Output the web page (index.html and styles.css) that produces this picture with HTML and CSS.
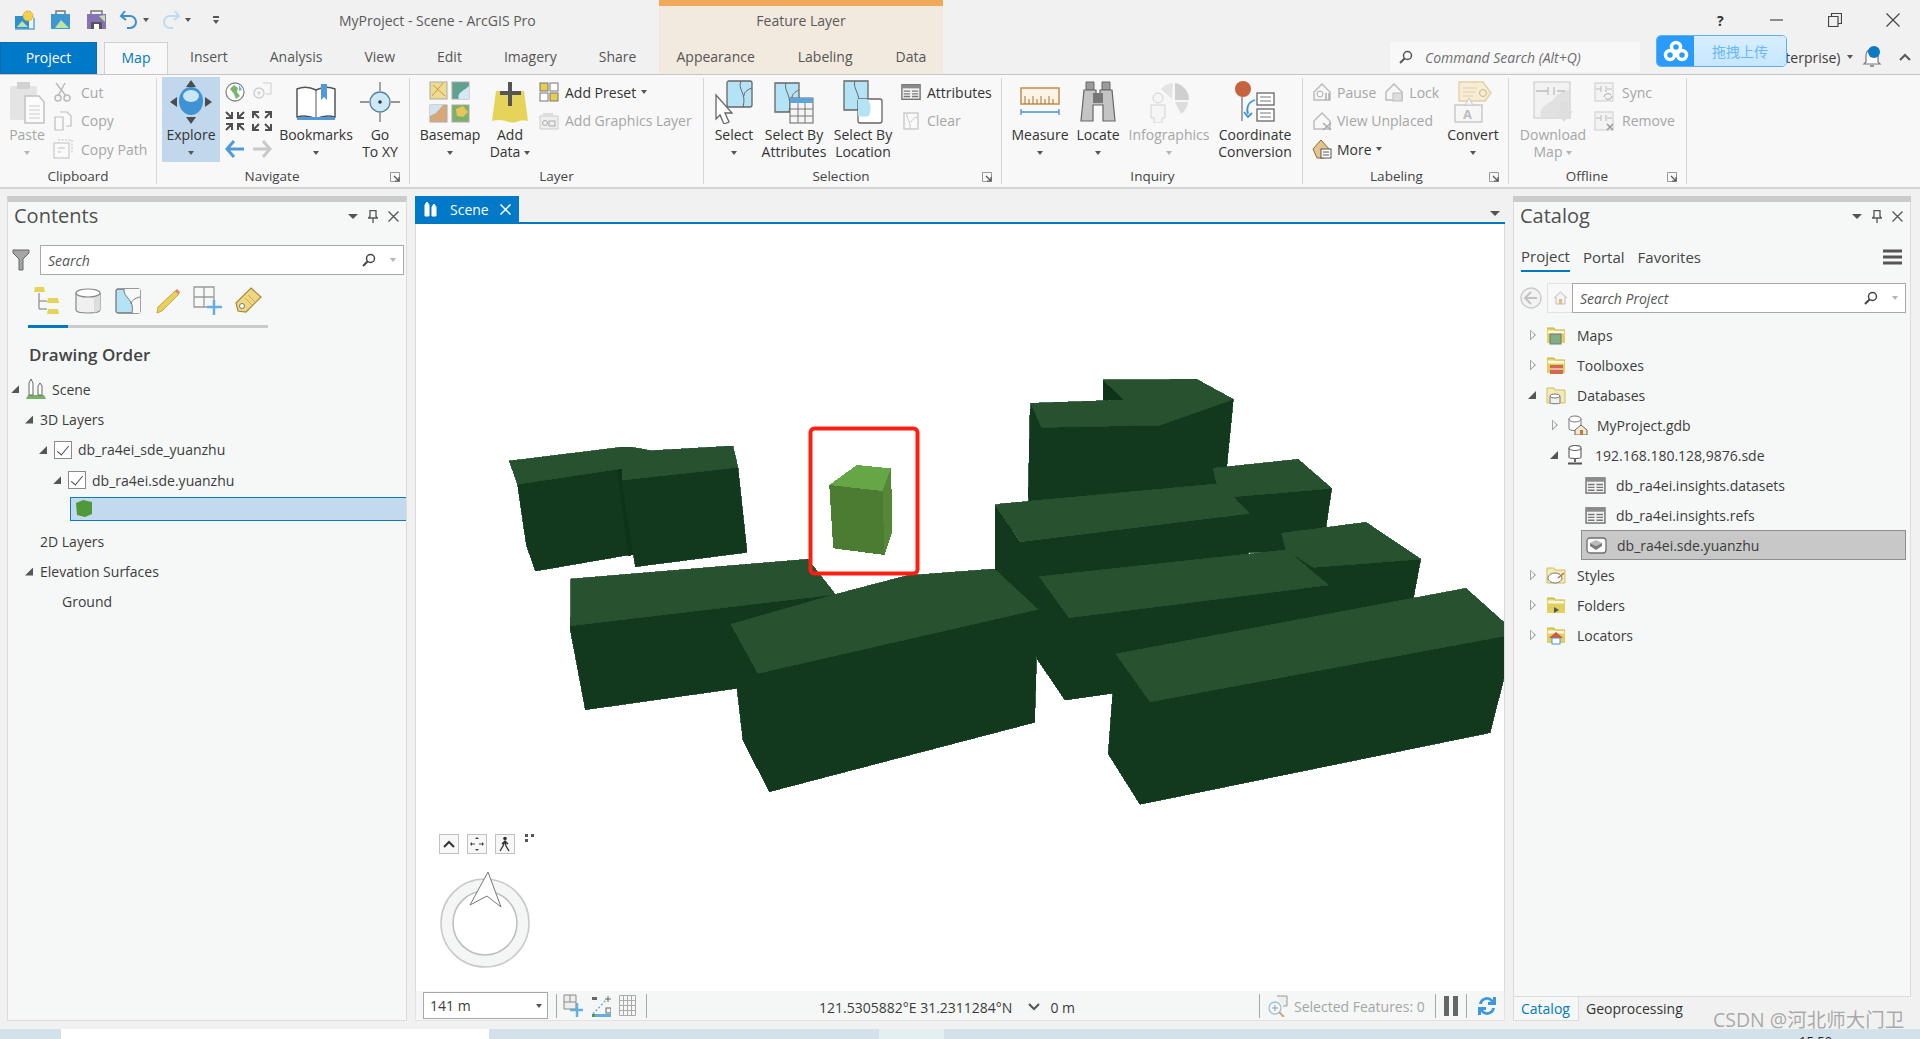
FILE: index.html
```html
<!DOCTYPE html>
<html lang="en">
<head>
<meta charset="utf-8">
<title>MyProject - Scene - ArcGIS Pro</title>
<link rel="stylesheet" href="styles.css">
</head>
<body>
<svg class="defs" width="0" height="0">
  <symbol id="folder" viewBox="0 0 20 20"><path d="M1 3h7l1 2h10v13H1z" fill="#e2cf5f"/><path d="M2 5.500h16v3H2z" fill="#fdf8dc"/><path d="M1 3h7l1 2h10" fill="none" stroke="#c9b343"/></symbol>
  <symbol id="tbl" viewBox="0 0 22 18"><rect x="1" y="1" width="20" height="16" fill="#f4f4f4" stroke="#6f6f6f" stroke-width="1.500"/><path d="M1 1h20v4H1z" fill="#8b8b8b"/><path d="M3 8h7M12 8h7M3 11h7M12 11h7M3 14h7M12 14h7" stroke="#777" stroke-width="1.500"/></symbol>
  <symbol id="launch" viewBox="0 0 10 10"><path d="M.5.500h9v9h-9z" fill="none" stroke="#999"/><path d="M4 4l5 5M9 5v4H5" fill="none" stroke="#555" stroke-width="1.200"/></symbol>
  <symbol id="tagh" viewBox="0 0 20 20"><path d="M2 10l8-8 8 8v8H2z" fill="none" stroke="#bbb" stroke-width="1.500"/><circle cx="8" cy="12" r="3" fill="none" stroke="#aaa"/><path d="M14 11v7M17 11v7" stroke="#aaa" stroke-width="1.500"/></symbol>
</svg>

<header class="top">
  <div class="top-left">
    <div class="titlebar">
      <div class="qat">
        <svg width="21" height="20" viewBox="0 0 21 20"><path d="M1 6h12l2-2v15H1z" fill="#2f8fcf"/><path d="M3 17l5-6 6 6z" fill="#bfe3a5"/><circle cx="14" cy="6" r="5" fill="#f2d24c" stroke="#c9a22e" stroke-dasharray="2 1"/><path d="M1 19h19V8" fill="none" stroke="#5aa6d8" stroke-width="1.500"/></svg>
        <svg width="21" height="20" viewBox="0 0 21 20"><path d="M6 1h9v4H6z" fill="none" stroke="#777" stroke-width="1.500"/><path d="M1 4h19v15H1z" fill="#3e97d3"/><path d="M5 18l6-8 8 8z" fill="#bfe3a5"/></svg>
        <svg width="21" height="20" viewBox="0 0 21 20"><path d="M5 1h11v4H5z" fill="none" stroke="#777" stroke-width="1.500"/><path d="M1 4h19v15H1z" fill="#8672b5"/><path d="M5 12h11v7H5z" fill="#555"/><path d="M8 14h5v5H8z" fill="#fff"/><path d="M13 6l6 6V5z" fill="#bfe3a5"/></svg>
        <span class="qat-split">
          <svg width="20" height="22" viewBox="0 0 20 22"><path d="M6 2L2 7l5 4" fill="none" stroke="#3b8fd0" stroke-width="2"/><path d="M3 7h8a6 6 0 0 1 0 12H8" fill="none" stroke="#3b8fd0" stroke-width="2"/></svg><i class="caret dark"></i>
        </span>
        <span class="qat-split">
          <svg width="20" height="22" viewBox="0 0 20 22"><path d="M14 2l4 5-5 4" fill="none" stroke="#bcdcf1" stroke-width="2"/><path d="M17 7H9a6 6 0 0 0 0 12h3" fill="none" stroke="#bcdcf1" stroke-width="2"/></svg><i class="caret dark"></i>
        </span>
        <span class="qat-more"><i class="bar"></i><i class="caret dark"></i></span>
      </div>
      <span class="title">MyProject - Scene - ArcGIS Pro</span>
    </div>
    <nav class="tabs">
      <span class="tab project">Project</span>
      <span class="tab active">Map</span>
      <span class="tab">Insert</span>
      <span class="tab">Analysis</span>
      <span class="tab">View</span>
      <span class="tab">Edit</span>
      <span class="tab">Imagery</span>
      <span class="tab">Share</span>
    </nav>
  </div>
  <div class="top-band">
    <div class="band-title">Feature Layer</div>
    <nav class="tabs band-tabs">
      <span class="tab">Appearance</span>
      <span class="tab">Labeling</span>
      <span class="tab">Data</span>
    </nav>
  </div>
  <div class="top-right">
    <div class="winctl">
      <span class="help">?</span>
      <svg width="14" height="14" viewBox="0 0 14 14"><path d="M0 7h13" stroke="#555" stroke-width="1.300"/></svg>
      <svg width="14" height="14" viewBox="0 0 14 14"><path d="M.5 3.500h9.500v10H.5zM3.500 3.500V.5h10v10H10" fill="none" stroke="#444" stroke-width="1.200"/></svg>
      <svg width="14" height="14" viewBox="0 0 14 14"><path d="M.5.5l13 13M13.500.5l-13 13" stroke="#444" stroke-width="1.200"/></svg>
    </div>
    <div class="searchrow">
      <div class="cmd">
        <svg width="14" height="14" viewBox="0 0 14 14"><circle cx="8.500" cy="5.500" r="4" fill="none" stroke="#555" stroke-width="1.500"/><path d="M5.500 8.500L1 13" stroke="#555" stroke-width="2"/></svg>
        <span>Command Search (Alt+Q)</span>
      </div>
      <div class="user">
        <span class="lic">Enterprise)</span><i class="caret dark"></i>
        <span class="bell">
          <svg width="20" height="22" viewBox="0 0 20 22"><path d="M4 16V9a6 6 0 0 1 12 0v7l2 2H2z" fill="#fff" stroke="#777" stroke-width="1.200"/><path d="M8 20h4" stroke="#777" stroke-width="1.500"/><circle cx="12" cy="6" r="6" fill="#0a7ac4"/></svg>
        </span>
        <svg class="collapse" width="12" height="8" viewBox="0 0 12 8"><path d="M1 7l5-5 5 5" fill="none" stroke="#555" stroke-width="2"/></svg>
      </div>
    </div>
    <div class="upload">
      <span class="upload-logo"><svg width="26" height="22" viewBox="0 0 26 22"><g fill="none" stroke="#fff" stroke-width="3.500"><circle cx="13" cy="7" r="4.500"/><circle cx="7" cy="15" r="4.500"/><circle cx="19" cy="15" r="4.500"/></g></svg></span>
      <span class="upload-text">拖拽上传</span>
    </div>
  </div>
</header>

<section class="ribbon">
  <div class="grp g-clip">
    <div class="body">
      <div class="lg w46 off">
        <div class="ico"><svg width="36" height="44" viewBox="0 0 36 44"><rect x="1" y="6" width="27" height="34" rx="2" fill="#e4e4e4"/><rect x="8" y="2" width="13" height="7" fill="#d2d2d2"/><path d="M16 16h14l5 6v21H16z" fill="#fbfbfb" stroke="#c2c2c2" stroke-width="1.500"/><path d="M20 26h11M20 30h11M20 34h11M20 38h11" stroke="#ccc"/></svg></div>
        <span class="lbl">Paste</span><span class="lbl"><i class="caret"></i></span>
      </div>
      <div class="col">
        <div class="sm off"><svg width="20" height="20" viewBox="0 0 20 20"><path d="M3 1l10 13M12 1L5 14" stroke="#bbb" stroke-width="1.500"/><circle cx="5" cy="16" r="3" fill="none" stroke="#bbb" stroke-width="1.500"/><circle cx="14" cy="16" r="3" fill="none" stroke="#bbb" stroke-width="1.500"/></svg><span>Cut</span></div>
        <div class="sm off"><svg width="20" height="20" viewBox="0 0 20 20"><path d="M2 6h8v13H2zM7 1h7l4 4v10h-5" fill="#fafafa" stroke="#bfbfbf" stroke-width="1.200"/></svg><span>Copy</span></div>
        <div class="sm off"><svg width="20" height="20" viewBox="0 0 20 20"><path d="M5 1h14v14" fill="none" stroke="#bfbfbf" stroke-dasharray="2 1.500"/><rect x="1" y="4" width="15" height="15" fill="#fafafa" stroke="#bfbfbf"/><path d="M5 9h7M5 13h3" stroke="#bfbfbf"/></svg><span>Copy Path</span></div>
      </div>
    </div>
    <div class="cap"><span>Clipboard</span></div>
  </div>

  <div class="grp g-nav">
    <div class="body">
      <div class="lg w58 hl">
        <div class="ico"><svg width="44" height="46" viewBox="0 0 44 46"><path d="M22 1l5 7H17zM22 45l5-7H17zM1 23l7-5v10zM43 23l-7-5v10z" fill="#4d4d4d"/><ellipse cx="22" cy="22" rx="12" ry="14" fill="#3f93d4"/><ellipse cx="22" cy="17" rx="8" ry="6" fill="#c9e6f7"/></svg></div>
        <span class="lbl">Explore</span><span class="lbl"><i class="caret dark"></i></span>
      </div>
      <div class="navgrid">
        <svg width="20" height="22" viewBox="0 0 20 22"><circle cx="10" cy="11" r="9" fill="#fff" stroke="#888" stroke-width="1.300"/><path d="M5 8l4-4 4 3-1 4 3 4-4 3-2-5z" fill="#79b56a"/><path d="M14 4l3 5-3 1z" fill="#67b2de"/></svg>
        <svg width="20" height="20" viewBox="0 0 20 20"><circle cx="7" cy="11" r="5" fill="none" stroke="#ccc" stroke-width="1.300"/><path d="M11 1h8v11h-5" fill="none" stroke="#ccc"/><path d="M5 11h4M7 9v4" stroke="#ccc"/></svg>
        <svg width="20" height="20" viewBox="0 0 20 20"><path d="M1 1l6 6M7 1v6H1M19 1l-6 6M13 1v6h6M1 19l6-6M7 19v-6H1M19 19l-6-6M13 19v-6h6" fill="none" stroke="#4f4f4f" stroke-width="2"/></svg>
        <svg width="20" height="20" viewBox="0 0 20 20"><path d="M7 7L1 1M1 7V1h6M13 7l6-6M19 7V1h-6M7 13l-6 6M1 13v6h6M13 13l6 6M19 13v6h-6" fill="none" stroke="#4f4f4f" stroke-width="2"/></svg>
        <svg width="20" height="20" viewBox="0 0 20 20"><path d="M9 2L2 10l7 8M2 10h17" fill="none" stroke="#4f9bd9" stroke-width="3"/></svg>
        <svg width="20" height="20" viewBox="0 0 20 20"><path d="M11 2l7 8-7 8M18 10H1" fill="none" stroke="#c9c9c9" stroke-width="3"/></svg>
      </div>
      <div class="lg w84">
        <div class="ico"><svg width="42" height="38" viewBox="0 0 42 38"><path d="M2 6c7-3 13-2 19 1 6-3 12-4 19-1v28c-7-2-13-1-19 2-6-3-12-4-19-2z" fill="#fff" stroke="#555" stroke-width="1.500"/><path d="M21 7v29" stroke="#555"/><path d="M26 1h6v16l-3-3-3 3z" fill="#4f9bd9"/><path d="M2 34h38v3H2z" fill="#4f9bd9"/></svg></div>
        <span class="lbl">Bookmarks</span><span class="lbl"><i class="caret dark"></i></span>
      </div>
      <div class="lg w44">
        <div class="ico"><svg width="40" height="42" viewBox="0 0 40 42"><circle cx="20" cy="21" r="10" fill="#cde9f8" stroke="#5a7f98" stroke-width="1.300"/><circle cx="20" cy="21" r="1.800" fill="#333"/><path d="M20 1v9M20 32v9M0 21h9M31 21h9" stroke="#777" stroke-width="1.300"/></svg></div>
        <span class="lbl">Go</span><span class="lbl">To XY</span>
      </div>
    </div>
    <div class="cap launchable"><span>Navigate</span><svg width="10" height="10"><use href="#launch"/></svg></div>
  </div>

  <div class="grp g-layer">
    <div class="body">
      <div class="lg w68">
        <div class="ico"><svg width="42" height="42" viewBox="0 0 42 42"><rect x="1" y="1" width="17" height="17" fill="#ecdc8d" stroke="#aaa"/><path d="M3 15L14 2M4 4l12 11" stroke="#cf8f5a"/><rect x="23" y="1" width="17" height="17" fill="#5fa08f" stroke="#aaa"/><path d="M30 18c-3-6 6-9 10-13v13z" fill="#d2e8f4"/><rect x="1" y="24" width="17" height="17" fill="#d6a777" stroke="#aaa"/><path d="M1 24h13l-7 8-6 3z" fill="#cfe4ef"/><rect x="23" y="24" width="17" height="17" fill="#7fb069" stroke="#aaa"/><path d="M27 28l7-3 5 6-5 5-6-1z" fill="#e8c45c"/></svg></div>
        <span class="lbl">Basemap</span><span class="lbl"><i class="caret dark"></i></span>
      </div>
      <div class="lg w52">
        <div class="ico"><svg width="38" height="44" viewBox="0 0 38 44"><path d="M5 11h28l4 30c-8-3-11 3-19 1-6-2-11-3-17-1z" fill="#e6d35a"/><path d="M19 2v24M9 13h21" stroke="#555" stroke-width="4"/></svg></div>
        <span class="lbl">Add</span><span class="lbl">Data<i class="caret dark mini"></i></span>
      </div>
      <div class="col">
        <div class="sm gap4"><svg width="20" height="20" viewBox="0 0 20 20"><rect x="1" y="1" width="8" height="8" fill="#e6cf4f" stroke="#777"/><rect x="11" y="1" width="8" height="8" fill="#fff" stroke="#777"/><rect x="1" y="11" width="8" height="8" fill="#fff" stroke="#777"/><rect x="11" y="11" width="8" height="8" fill="#e6cf4f" stroke="#777"/></svg><span>Add Preset</span><i class="caret dark tight"></i></div>
        <div class="sm gap4 off"><svg width="20" height="20" viewBox="0 0 20 20"><path d="M1 5h18v13H1z" fill="#eee" stroke="#ccc"/><rect x="4" y="2" width="10" height="3" fill="#ddd"/><circle cx="6" cy="12" r="2.500" fill="none" stroke="#aaa"/><rect x="10" y="10" width="6" height="5" fill="none" stroke="#aaa"/></svg><span>Add Graphics Layer</span></div>
      </div>
    </div>
    <div class="cap"><span>Layer</span></div>
  </div>

  <div class="grp g-sel">
    <div class="body">
      <div class="lg w52">
        <div class="ico"><svg width="40" height="44" viewBox="0 0 40 44"><rect x="13" y="1" width="25" height="26" rx="2" fill="#b5e3f6" stroke="#666" stroke-width="1.300"/><path d="M27 1c-4 8 6 12 2 26M38 8C32 10 30 13 30 16" fill="none" stroke="#666"/><path d="M2 15l16 18-7 0 4 9-5 2-4-9-4 4z" fill="#fff" stroke="#666" stroke-width="1.300"/></svg></div>
        <span class="lbl">Select</span><span class="lbl"><i class="caret dark"></i></span>
      </div>
      <div class="lg w68">
        <div class="ico"><svg width="40" height="44" viewBox="0 0 40 44"><path d="M1 3h24v29H1z" fill="#b5e3f6" stroke="#666" stroke-width="1.300"/><path d="M12 3c-3 8 7 12 3 29M25 10c-5 2-7 5-7 8" fill="none" stroke="#666"/><rect x="16" y="18" width="23" height="25" fill="#f5f5f5" stroke="#666"/><path d="M16 18h23v5H16z" fill="#5ca5dc"/><path d="M16 29h23M16 36h23M24 23v20M31 23v20" stroke="#777"/></svg></div>
        <span class="lbl">Select By</span><span class="lbl">Attributes</span>
      </div>
      <div class="lg w70">
        <div class="ico"><svg width="40" height="44" viewBox="0 0 40 44"><path d="M1 1h24v29H1z" fill="#b5e3f6" stroke="#666" stroke-width="1.300"/><path d="M12 1c-3 8 7 12 3 29" fill="none" stroke="#666"/><rect x="15" y="19" width="24" height="24" rx="2" fill="#fff" stroke="#666" stroke-width="1.300"/><path d="M15 19h9c6 6 3 14 2 17-3 1-7 1-11 0z" fill="#b5e3f6"/></svg></div>
        <span class="lbl">Select By</span><span class="lbl">Location</span>
      </div>
      <div class="col">
        <div class="sm gap4"><svg width="20" height="18"><use href="#tbl"/></svg><span>Attributes</span></div>
        <div class="sm gap4 off"><svg width="20" height="20" viewBox="0 0 20 20"><rect x="3" y="2" width="14" height="16" fill="#fafafa" stroke="#c5c5c5" stroke-width="1.300"/><path d="M6 3c-1 5 4 6 3 15M16 6c-3 1-5 3-6 5" fill="none" stroke="#c5c5c5"/></svg><span>Clear</span></div>
      </div>
    </div>
    <div class="cap launchable"><span>Selection</span><svg width="10" height="10"><use href="#launch"/></svg></div>
  </div>

  <div class="grp g-inq">
    <div class="body">
      <div class="lg w62">
        <div class="ico"><svg width="40" height="30" viewBox="0 0 40 30"><rect x="1" y="1" width="38" height="16" fill="#fdf4e6" stroke="#c58b4a" stroke-width="1.500"/><path d="M5 17v-8M9 17v-5M13 17v-8M17 17v-5M21 17v-8M25 17v-5M29 17v-8M33 17v-5" stroke="#a9713a"/><path d="M1 25h38M1 22v6M39 22v6" stroke="#3f93d4" stroke-width="1.300"/></svg></div>
        <span class="lbl">Measure</span><span class="lbl"><i class="caret dark"></i></span>
      </div>
      <div class="lg w54">
        <div class="ico"><svg width="36" height="42" viewBox="0 0 36 42"><path d="M6 1h8v8H6zM22 1h8v8h-8z" fill="#9c9c9c" stroke="#666"/><path d="M4 9h12v8h4V9h12l3 31H23V24h-10v16H1z" fill="#c4c4c4" stroke="#666" stroke-width="1.200"/><path d="M13 12h10v10H13z" fill="#777"/></svg></div>
        <span class="lbl">Locate</span><span class="lbl"><i class="caret dark"></i></span>
      </div>
      <div class="lg w88 off">
        <div class="ico"><svg width="42" height="42" viewBox="0 0 42 42"><path d="M24 18L25 2a17 17 0 0 0-12 6z" fill="#e4e4e4"/><path d="M27 2a17 17 0 0 1 14 17H27z" fill="#cfcfcf"/><path d="M27 21h13a17 17 0 0 1-7 12z" fill="#dcdcdc"/><circle cx="10" cy="17" r="5" fill="#f5f5f5" stroke="#d3d3d3"/><path d="M3 24h14v13h-3v5H6v-5H3z" fill="#f5f5f5" stroke="#d3d3d3"/></svg></div>
        <span class="lbl">Infographics</span><span class="lbl"><i class="caret"></i></span>
      </div>
      <div class="lg w84">
        <div class="ico"><svg width="40" height="44" viewBox="0 0 40 44"><circle cx="8" cy="9" r="8" fill="#c5633f"/><path d="M7 17v24" stroke="#888" stroke-width="1.500"/><rect x="22" y="13" width="17" height="12" fill="#fff" stroke="#666" stroke-width="1.300"/><path d="M25 17h11M25 21h11" stroke="#777"/><rect x="22" y="29" width="17" height="12" fill="#fff" stroke="#666" stroke-width="1.300"/><path d="M25 33h11M25 37h11" stroke="#777"/><path d="M20 20c-7 2-9 8-7 14M9 32l4 5 4-4" fill="none" stroke="#3f93d4" stroke-width="1.800"/></svg></div>
        <span class="lbl">Coordinate</span><span class="lbl">Conversion</span>
      </div>
    </div>
    <div class="cap"><span>Inquiry</span></div>
  </div>

  <div class="grp g-lab">
    <div class="body">
      <div class="col w140">
        <div class="sm gap3 off"><svg width="20" height="20"><use href="#tagh"/></svg><span>Pause</span><svg class="lock" width="20" height="20" viewBox="0 0 20 20"><path d="M2 10l8-8 8 8v8H2z" fill="none" stroke="#bbb" stroke-width="1.500"/><rect x="9" y="11" width="9" height="8" fill="#ddd" stroke="#bbb"/></svg><span>Lock</span></div>
        <div class="sm gap3 off"><svg width="20" height="20" viewBox="0 0 20 20"><path d="M2 10l8-8 8 8v8H2z" fill="none" stroke="#bbb" stroke-width="1.500"/><path d="M11 12l8 7M19 12l-8 7" stroke="#aaa" stroke-width="1.500"/></svg><span>View Unplaced</span></div>
        <div class="sm gap3"><svg width="20" height="20" viewBox="0 0 20 20"><path d="M1 10l8-9 8 9-5 9H5z" fill="#e3c58d" stroke="#8a6b34"/><rect x="9" y="10" width="10" height="9" fill="#fff" stroke="#555"/><path d="M11 13h6M11 16h6" stroke="#555"/></svg><span>More</span><i class="caret dark tight"></i></div>
      </div>
      <div class="lg w60">
        <div class="ico"><svg width="38" height="42" viewBox="0 0 38 42"><path d="M5 1h24l8 11-6 8H5z" fill="#f7ecd6" stroke="#e3cfa6" stroke-width="1.300"/><path d="M9 7h14M9 11h12M9 15h10" stroke="#e3cfa6"/><circle cx="29" cy="12" r="3.500" fill="none" stroke="#cdb587"/><path d="M1 24h27v17H1z" fill="#f6f6f6" stroke="#c9c9c9" stroke-width="1.500"/><path d="M15 17l-4 7h8z" fill="#f6f6f6" stroke="#c9c9c9"/><text x="9" y="38" class="icon-a">A</text></svg></div>
        <span class="lbl">Convert</span><span class="lbl"><i class="caret dark"></i></span>
      </div>
    </div>
    <div class="cap launchable"><span>Labeling</span><svg width="10" height="10"><use href="#launch"/></svg></div>
  </div>

  <div class="grp g-off">
    <div class="body">
      <div class="lg w76 off">
        <div class="ico"><svg width="40" height="42" viewBox="0 0 40 42"><rect x="1" y="1" width="36" height="36" fill="#f2f2f2" stroke="#d6d6d6" stroke-width="1.500"/><path d="M8 36c-2-8 3-10 7-14 8-3 6-10 21-13v27z" fill="#e1e1e1"/><path d="M3 10h12M24 10h8M15 6v8M21 6v8" stroke="#bdbdbd" stroke-width="1.300"/><path d="M27 20h8v10h5L31 41 22 30h5z" fill="#dedede"/></svg></div>
        <span class="lbl">Download</span><span class="lbl">Map<i class="caret mini"></i></span>
      </div>
      <div class="col">
        <div class="sm off"><svg width="20" height="20" viewBox="0 0 20 20"><rect x="1" y="1" width="18" height="18" fill="#f3f3f3" stroke="#ccc"/><path d="M2 7h5M13 7h5M7 4v6M12 4v6" stroke="#bbb"/><path d="M10 15a4 4 0 0 1 7-2M18 14a4 4 0 0 1-7 2" fill="none" stroke="#aaa"/></svg><span>Sync</span></div>
        <div class="sm off"><svg width="20" height="20" viewBox="0 0 20 20"><rect x="1" y="1" width="18" height="18" fill="#f3f3f3" stroke="#ccc"/><path d="M2 7h5M13 7h5M7 4v6M12 4v6" stroke="#bbb"/><path d="M13 13l6 6M19 13l-6 6" stroke="#999" stroke-width="1.500"/></svg><span>Remove</span></div>
      </div>
    </div>
    <div class="cap launchable"><span>Offline</span><svg width="10" height="10"><use href="#launch"/></svg></div>
  </div>
</section>

<main class="work">
  <aside class="panel contents">
    <div class="phead"><span class="ptitle">Contents</span>
      <span class="pctl"><i class="caret dark big"></i>
        <svg width="10" height="13" viewBox="0 0 10 13"><path d="M2 .5h6v6l1.500 1.500h-9L2 6.500zM5 8v5" fill="none" stroke="#555" stroke-width="1.300"/></svg>
        <svg width="11" height="11" viewBox="0 0 11 11"><path d="M.5.5l10 10M10.500.5l-10 10" stroke="#555" stroke-width="1.300"/></svg>
      </span>
    </div>
    <div class="searchline">
      <svg class="filter" width="18" height="22" viewBox="0 0 18 22"><path d="M1 1h16v3l-6 6v11H7V10L1 4z" fill="#a5a5a5" stroke="#666"/></svg>
      <div class="sbox"><span>Search</span>
        <svg width="14" height="14" viewBox="0 0 14 14"><circle cx="8.500" cy="5.500" r="4" fill="none" stroke="#444" stroke-width="1.500"/><path d="M5.500 8.500L1 13" stroke="#444" stroke-width="2"/></svg><i class="caret"></i>
      </div>
    </div>
    <div class="viewtabs">
      <span><svg width="28" height="28" viewBox="0 0 28 28"><path d="M1 0h9l1 5H0zM14 11h10l1 5H13zM14 22h10l1 5H13z" fill="#e6d35a"/><path d="M5 6v16h8M5 14h8" fill="none" stroke="#777"/></svg></span>
      <span><svg width="26" height="26" viewBox="0 0 26 26"><path d="M1 5v17c0 4 24 4 24 0V5" fill="#f0f0f0" stroke="#888" stroke-width="1.200"/><path d="M19 8v17l6-3V5z" fill="#ddd"/><ellipse cx="13" cy="5" rx="12" ry="4" fill="#fff" stroke="#888" stroke-width="1.200"/></svg></span>
      <span><svg width="26" height="26" viewBox="0 0 26 26"><rect x="1" y="1" width="24" height="24" rx="2" fill="#b5e3f6" stroke="#777" stroke-width="1.300"/><path d="M9 1c-1 9 11 10 8 24h8V1z" fill="#f8f8f8"/><path d="M9 1c-1 9 11 10 8 24M25 9c-5 1-9 4-9 7" fill="none" stroke="#777"/></svg></span>
      <span><svg width="26" height="26" viewBox="0 0 26 26"><path d="M3 19L20 3l4 3L7 23l-5 2z" fill="#e9cf5e" stroke="#b59b33" stroke-width=".8"/><path d="M20 3l2-2 3 3-1 2z" fill="#d98672"/></svg></span>
      <span><svg width="30" height="30" viewBox="0 0 30 30"><path d="M1 1h20v20H1zM11 1v20M1 11h20" fill="none" stroke="#999" stroke-width="1.300"/><path d="M21 14v15M14 21h15" stroke="#65aee0" stroke-width="2.500"/></svg></span>
      <span><svg width="28" height="28" viewBox="0 0 28 28"><path d="M17 1l10 9-15 15-8-1-2-8z" fill="#edd782" stroke="#a98a3c" stroke-width="1.200"/><circle cx="8" cy="19" r="2.500" fill="#fff" stroke="#777"/><path d="M11 11l7 7M14 8l7 7" stroke="#c9ae55"/></svg></span>
    </div>
    <div class="vt-rule"><i></i></div>
    <h2 class="order">Drawing Order</h2>
    <ul class="tree">
      <li class="l0"><i class="tri open"></i><svg width="20" height="22" viewBox="0 0 20 22"><path d="M0 21l2-4h16l2 4z" fill="#78b06a"/><path d="M3 17V5l2-4 2 4v12zM12 17V8l2-3 2 3v9z" fill="#fff" stroke="#666"/></svg><span>Scene</span></li>
      <li class="l1"><i class="tri open"></i><span>3D Layers</span></li>
      <li class="l2"><i class="tri open"></i><i class="chk"></i><span>db_ra4ei_sde_yuanzhu</span></li>
      <li class="l3"><i class="tri open"></i><i class="chk"></i><span>db_ra4ei.sde.yuanzhu</span></li>
      <li class="l4"><div class="selbar"><svg width="18" height="19" viewBox="0 0 18 19"><path d="M1 4l7-3 9 2v12l-7 3-8-2z" fill="#4e9a3a"/></svg></div></li>
      <li class="l1 noicon"><span>2D Layers</span></li>
      <li class="l1"><i class="tri open"></i><span>Elevation Surfaces</span></li>
      <li class="l5"><span>Ground</span></li>
    </ul>
  </aside>

  <section class="view">
    <div class="viewtab-strip">
      <div class="scenetab">
        <svg width="16" height="16" viewBox="0 0 16 16"><path d="M2 15V4l2-3 2 3v11zM9 15V6l2-3 2 3v9z" fill="#fff" stroke="#fff"/></svg>
        <span>Scene</span>
        <svg width="11" height="11" viewBox="0 0 11 11"><path d="M.5.5l10 10M10.500.5l-10 10" stroke="#fff" stroke-width="1.500"/></svg>
      </div>
      <i class="caret dark big strip-menu"></i>
    </div>
    <div class="scene">
      <svg class="buildings" viewBox="415 224 1090 767" width="1090" height="767">
        <g class="side"><polygon points="517.500,484 622,468 628,555 535.400,571 526.400,545"/></g>
        <g class="top"><polygon points="509.300,461 621,447.300 631.800,447.300 622,468.300 517.500,484"/></g>
        <g class="seam"><polygon points="617,470 624,468 634,555 628,556"/></g>
        <g class="side"><polygon points="622,480 737.900,467.300 747,552.300 635.400,566.700 633.600,555"/></g>
        <g class="top"><polygon points="622,480 737.900,467.300 732.900,446 651.400,450.700 631.800,447.300 622,468.300"/></g>

        <g class="side"><polygon points="1041.700,427.300 1160,425 1233.300,399.300 1226.700,466.700 1217,490 1030,510 1028.300,496.700 1030,415 1031,403.300"/></g>
        <g class="seam"><polygon points="1103.300,380 1124,400 1103.300,400.700"/></g>
        <g class="top"><polygon points="1031,403.300 1124,400 1103.300,380 1196.700,379.300 1233.300,399.300 1160,425 1041.700,427.300"/></g>
        <g class="side"><polygon points="1233.300,496.700 1331.700,488.300 1326,526.700 1286,552 1248.300,552"/></g>
        <g class="top"><polygon points="1213.300,468.300 1298.300,459.300 1331.700,488.300 1233.300,496.700 1216.700,483.300"/></g>

        <g class="side"><polygon points="995,505 1020,542 1249,513 1248,555 1040,590 1040,660 995,600"/></g>
        <g class="top"><polygon points="995,505 1000,504 1216.700,484 1233.300,496.700 1249.300,513.300 1020.700,541.700"/></g>

        <g class="side"><polygon points="1286,550 1313.300,567.300 1420.700,559 1413.300,598.300 1328.300,620 1300,600"/></g>
        <g class="top"><polygon points="1281.700,533.300 1366,522.300 1420.700,559 1313.300,567.300 1286,550"/></g>

        <g class="side"><polygon points="1069,617.700 1328.300,585 1328.300,615 1125,660 1125,691.500 1065,700 1037.300,659.300 1039.300,576.700"/></g>
        <g class="top"><polygon points="1039.300,576.700 1286.700,550 1328.300,585 1069,617.700"/></g>

        <g class="side"><polygon points="570.400,625.700 835.400,594.300 900,600 737,688.300 585.400,709.700 570.400,630"/></g>
        <g class="top"><polygon points="571,579 807.900,559.300 835.400,594.300 570.400,625.700"/></g>

        <g class="side"><polygon points="757.900,673.300 1037.900,609.300 1034.600,722.300 769.300,791.700 743,740 737,688 731,624.300"/></g>
        <g class="top"><polygon points="731,624.300 837,594 906.800,575.700 994.300,569 1037.900,609.300 757.900,673.300"/></g>

        <g class="side"><polygon points="1150,701.700 1504,636 1503.500,680 1490,732.700 1140,804.300 1108.300,754 1113,690 1116,654"/></g>
        <g class="top"><polygon points="1116,654 1466,588.300 1504,622.300 1504,636 1150,701.700"/></g>

        <polygon class="cube-top" points="829.300,485 856.800,465 890.700,468.300 882.500,491"/>
        <polygon class="cube-front" points="829.300,485 882.500,491 884.600,555 833.200,548.300"/>
        <polygon class="cube-right" points="882.500,491 890.700,468.300 892,501.700 892,532.700 884.600,555"/>
        <rect class="redbox" x="810.500" y="428.500" width="107" height="145" rx="4"/>
      </svg>
      <div class="navbtns">
        <span class="nbtn"><svg width="12" height="8" viewBox="0 0 12 8"><path d="M1 7l5-5 5 5" fill="none" stroke="#333" stroke-width="2"/></svg></span>
        <span class="nbtn"><svg width="16" height="16" viewBox="0 0 16 16"><path d="M8 1l2 2H6zM8 15l2-2H6zM1 8l2-2v4zM15 8l-2-2v4z" fill="#444"/><path d="M3 8h3M10 8h3" stroke="#444"/></svg></span>
        <span class="nbtn"><svg width="14" height="16" viewBox="0 0 14 16"><circle cx="7" cy="2.500" r="1.800" fill="#333"/><path d="M7 5L5 10l-3 5M7 5l1 5 3 5M4 8l3-3 3 3" fill="none" stroke="#333" stroke-width="1.300"/></svg></span>
        <span class="grip"><i></i><i></i><i></i></span>
      </div>
      <svg class="compass" width="96" height="100" viewBox="0 0 96 100"><circle cx="45" cy="54" r="44" fill="#f4f6f5" stroke="#c9c9c9" stroke-width="1.500"/><circle cx="45" cy="54" r="32" fill="#fff" stroke="#bdbdbd" stroke-width="1.500"/><path d="M48 3L30 36l17-9 14 11z" fill="#fff" stroke="#777"/></svg>
    </div>
    <footer class="status">
      <div class="scale"><span>141 m</span><i class="caret dark"></i></div>
      <i class="vsep"></i>
      <svg class="st-first" width="20" height="26" viewBox="0 0 20 26"><path d="M1 2h12v14H1zM1 9h12M7 2v7" fill="#eee" stroke="#888"/><path d="M14 10v14M7 17h13" stroke="#65aee0" stroke-width="2.500"/></svg>
      <svg width="20" height="24" viewBox="0 0 20 24"><path d="M1 20h20v3H1z" fill="#65aee0"/><path d="M2 20L16 5" stroke="#65aee0" stroke-dasharray="2 2" stroke-width="1.500"/><rect x="1" y="3" width="5" height="3" fill="#666"/><rect x="15" y="14" width="5" height="5" fill="none" stroke="#666"/><path d="M14 5h6M17 2v6" stroke="#666"/><rect x="1" y="20" width="3" height="3" fill="#5a9a3c"/></svg>
      <svg width="17" height="21" viewBox="0 0 17 21"><path d="M.5.500h16v20H.5zM.5 5.500h16M.5 10.500h16M.5 15.500h16M4.500.5v20M8.500.5v20M12.500.5v20" fill="none" stroke="#aaa"/></svg>
      <i class="vsep st-after"></i>
      <span class="coords">121.5305882°E 31.2311284°N</span>
      <svg class="chev" width="12" height="8" viewBox="0 0 12 8"><path d="M1 1l5 5 5-5" fill="none" stroke="#555" stroke-width="2"/></svg>
      <span class="elev">0 m</span>
      <i class="vsep right"></i>
      <svg width="20" height="22" viewBox="0 0 20 22"><circle cx="7" cy="13" r="6" fill="#f4f7f9" stroke="#9cc2dc" stroke-width="1.300"/><path d="M11 17l5 5" stroke="#c9a67d" stroke-width="2"/><path d="M9 1h10v10h-4" fill="#eee" stroke="#999"/><path d="M4 13h6M7 10v6" stroke="#999"/></svg>
      <span class="selcount">Selected Features: 0</span>
      <i class="vsep st-p"></i>
      <span class="pause"><i></i><i></i></span>
      <i class="vsep"></i>
      <svg class="st-refresh" width="20" height="20" viewBox="0 0 20 20"><path d="M2 8a8 8 0 0 1 14-4V1h3v8h-8V6h3a5 5 0 0 0-9 2zM18 12a8 8 0 0 1-14 4v3H1v-8h8v3H6a5 5 0 0 0 9-2z" fill="#3f97dc"/></svg>
    </footer>
  </section>

  <aside class="panel catalog">
    <div class="catalog-body">
      <div class="phead"><span class="ptitle">Catalog</span>
        <span class="pctl"><i class="caret dark big"></i>
          <svg width="10" height="13" viewBox="0 0 10 13"><path d="M2 .5h6v6l1.500 1.500h-9L2 6.500zM5 8v5" fill="none" stroke="#555" stroke-width="1.300"/></svg>
          <svg width="11" height="11" viewBox="0 0 11 11"><path d="M.5.5l10 10M10.500.5l-10 10" stroke="#555" stroke-width="1.300"/></svg>
        </span>
      </div>
      <div class="cattabs">
        <span class="on">Project</span><span>Portal</span><span>Favorites</span>
        <svg width="19" height="16" viewBox="0 0 19 16"><path d="M0 2h19M0 8h19M0 14h19" stroke="#555" stroke-width="3.200"/></svg>
      </div>
      <div class="catsearch">
        <svg width="22" height="22" viewBox="0 0 22 22"><circle cx="11" cy="11" r="10" fill="#f3f3f3" stroke="#c9c9c9" stroke-width="1.300"/><path d="M11 5l-6 6 6 6M5 11h12" fill="none" stroke="#c2c2c2" stroke-width="2"/></svg>
        <span class="homebtn"><svg width="15" height="14" viewBox="0 0 15 14"><path d="M1 7l6.500-6L14 7M3 6v7h9V6" fill="#f2f2f2" stroke="#bdbdbd"/><rect x="6" y="8" width="3" height="5" fill="#d6c27d"/></svg></span>
        <div class="sbox"><span>Search Project</span>
          <svg width="14" height="14" viewBox="0 0 14 14"><circle cx="8.500" cy="5.500" r="4" fill="none" stroke="#444" stroke-width="1.500"/><path d="M5.500 8.500L1 13" stroke="#444" stroke-width="2"/></svg><i class="caret"></i>
        </div>
      </div>
      <ul class="cattree">
        <li class="c0"><i class="tri shut"></i><svg width="20" height="20" viewBox="0 0 20 20"><use href="#folder"/><rect x="4" y="9" width="11" height="10" fill="#7fae86" stroke="#777"/></svg><span>Maps</span></li>
        <li class="c0"><i class="tri shut"></i><svg width="20" height="20" viewBox="0 0 20 20"><use href="#folder"/><rect x="4" y="10" width="13" height="9" fill="#cf6a4d"/><path d="M4 14h13" stroke="#fff"/></svg><span>Toolboxes</span></li>
        <li class="c0"><i class="tri open"></i><svg width="20" height="20" viewBox="0 0 20 20"><path d="M1 3h7l1 2h10v13H1z" fill="#f2eab8" stroke="#d2bf5b"/><path d="M4 11v7c0 1 10 1 10 0v-7" fill="#eee" stroke="#777"/><ellipse cx="9" cy="11" rx="5" ry="2" fill="#fff" stroke="#777"/></svg><span>Databases</span></li>
        <li class="c1"><i class="tri shut"></i><svg width="20" height="20" viewBox="0 0 20 20"><path d="M1 4v10c0 2 12 2 12 0V4" fill="#fff" stroke="#777"/><ellipse cx="7" cy="4" rx="6" ry="3" fill="#fff" stroke="#777"/><path d="M7 15l6-5 6 5v5H7z" fill="#f3ead2" stroke="#666"/><rect x="12" y="15" width="3" height="5" fill="#c6793c"/></svg><span>MyProject.gdb</span></li>
        <li class="c1"><i class="tri open"></i><svg width="20" height="20" viewBox="0 0 20 20"><path d="M3 3v9c0 2 12 2 12 0V3" fill="#fff" stroke="#666" stroke-width="1.200"/><ellipse cx="9" cy="3" rx="6" ry="2.500" fill="#fff" stroke="#666" stroke-width="1.200"/><path d="M9 14v3M2 18.500h14" stroke="#555" stroke-width="1.800"/></svg><span>192.168.180.128,9876.sde</span></li>
        <li class="c2"><svg width="21" height="17"><use href="#tbl"/></svg><span>db_ra4ei.insights.datasets</span></li>
        <li class="c2"><svg width="21" height="17"><use href="#tbl"/></svg><span>db_ra4ei.insights.refs</span></li>
        <li class="c2 picked"><svg width="21" height="17" viewBox="0 0 21 17"><rect x="1" y="1" width="19" height="15" rx="3" fill="#fafafa" stroke="#6f6f6f" stroke-width="1.300"/><path d="M10 3l6 3-6 3-6-3z" fill="#bbb"/><path d="M4 6v3l6 4V9zM16 6v3l-6 4V9z" fill="#7a7a7a"/></svg><span>db_ra4ei.sde.yuanzhu</span></li>
        <li class="c0"><i class="tri shut"></i><svg width="20" height="20" viewBox="0 0 20 20"><path d="M1 3h7l1 2h10v13H1z" fill="#f2eab8" stroke="#d2bf5b"/><ellipse cx="9" cy="13" rx="7" ry="5" fill="#fff" stroke="#777"/><path d="M12 13l6-5" stroke="#c4674d" stroke-width="1.500"/></svg><span>Styles</span></li>
        <li class="c0"><i class="tri shut"></i><svg width="20" height="20" viewBox="0 0 20 20"><use href="#folder"/><path d="M8 12l5 3-5 3z" fill="#555"/></svg><span>Folders</span></li>
        <li class="c0"><i class="tri shut"></i><svg width="20" height="20" viewBox="0 0 20 20"><use href="#folder"/><path d="M3 13l7-6 7 6z" fill="#d4553c"/><rect x="6" y="13" width="8" height="6" fill="#fff" stroke="#3f97dc"/></svg><span>Locators</span></li>
      </ul>
    </div>
    <div class="cat-foot"><span class="on">Catalog</span><span>Geoprocessing</span></div>
  </aside>
</main>

<div class="taskstrip"><i class="s-a"></i><i class="s-b"></i><i class="s-a grow1"></i><i class="s-c"></i><i class="s-a grow2"><b>15:50</b></i></div>
<div class="watermark">CSDN @河北师大门卫</div>
</body>
</html>
```
FILE: styles.css
```css
* { box-sizing: border-box; }
html, body { margin: 0; height: 100%; }
body {
  width: 1920px; height: 1039px; overflow: hidden; position: relative;
  background: #f1f1f1; color: #3c3c3c;
  font: 14px/17px "Open Sans", "Noto Sans CJK SC", sans-serif;
}
.defs { position: absolute; }
svg { display: block; flex: none; }
ul { list-style: none; margin: 0; padding: 0; }

.caret { display: inline-block; border: 3.5px solid transparent; border-top: 4px solid #b5b5b5; border-bottom: 0; vertical-align: middle; }
.caret.dark { border-top-color: #555; }
.caret.mini { margin-left: 4px; }
.caret.tight { margin-left: -1px; }
.caret.big { border-width: 5px 5px 0; }

/* top */
.top { display: grid; grid-template-columns: 659px 284px 1fr; height: 74px; }
.titlebar { display: flex; align-items: center; height: 40px; }
.qat { display: flex; align-items: center; width: 339px; padding-left: 14px; gap: 15px; }
.qat-split { display: flex; align-items: center; gap: 4px; margin-left: -3px; }
.qat-more { display: flex; flex-direction: column; align-items: center; gap: 2px; margin-left: 7px; }
.qat-more .bar { width: 6px; height: 1.500px; background: #555; }
.title { color: #5a5a5a; }
.tabs { display: flex; height: 34px; align-items: stretch; }
.tab { padding: 8px 21px 0; color: #555; }
.tab.project { width: 97px; margin-top: 2px; padding: 6px 0 0; text-align: center; color: #fff; background: #0079c8; border: 1px solid #0a6db0; }
.tab.active { width: 64px; margin: 2px 1px 0 7px; padding: 6px 0 0; text-align: center; color: #0079c1; background: #f8f8f8; border: 1px solid #d0d0d0; border-bottom: 0; }
.top-band { background: #f2e9df; border-top: 6px solid #f0a958; }
.band-title { height: 34px; padding-top: 6px; text-align: center; color: #5a5a5a; }
.band-tabs { margin-left: -4px; }
.band-tabs .tab { padding: 8px 21.500px 0; }
.top-right { position: relative; }
.winctl { display: flex; align-items: center; height: 40px; padding-left: 774px; gap: 44px; }
.help { width: 9px; font-weight: 700; color: #333; }
.searchrow { display: flex; height: 30px; margin-top: 2px; padding-left: 447px; }
.cmd { display: flex; align-items: center; gap: 12px; width: 250px; height: 30px; padding-left: 9px; background: #f8f8f8; font-style: italic; color: #6e6e6e; }
.user { display: flex; align-items: center; margin-left: 129px; white-space: nowrap; }
.lic { color: #3c3c3c; }
.user .caret { margin-left: 7px; }
.bell { margin-left: 9px; }
.collapse { margin-left: 17px; }
.upload { position: absolute; left: 713px; top: 35px; width: 131px; height: 32px; display: flex; border: 1px solid #5bb0f4; border-radius: 5px; overflow: hidden; }
.upload-logo { display: flex; align-items: center; justify-content: center; width: 37px; background: #2a9bfb; }
.upload-text { flex: 1; display: flex; align-items: center; justify-content: center; background: linear-gradient(#d8eeff, #c6e7ff); color: #68b9f4; font-size: 14px; }

/* ribbon */
.ribbon { display: flex; height: 115px; background: #f8f8f8; border-top: 1px solid #c6c6c6; border-bottom: 2px solid #d4d4d4; padding-top: 3px; }
.grp { display: flex; flex-direction: column; height: 106px; border-right: 1px solid #d6d6d6; position: relative; }
.g-clip { width: 157px; }
.g-nav { width: 253px; padding-left: 5px; }
.g-layer { width: 294px; padding-left: 6px; }
.g-sel { width: 298px; padding-left: 4px; }
.g-inq { width: 301px; padding-left: 7px; }
.g-lab { width: 206px; padding-left: 9px; }
.g-off { width: 178px; padding-left: 6px; }
.body { display: flex; height: 91px; }
.cap { display: flex; align-items: center; justify-content: center; height: 15px; color: #444; font-size: 13.500px; }
.cap span { flex: 1; text-align: center; }
.cap.launchable { padding-right: 9px; margin-left: -5px; }
.g-layer .cap span, .g-inq .cap span { margin-left: -6px; }
.cap.launchable span { margin-right: 3px; }
.lg { display: flex; flex-direction: column; align-items: center; flex: none; color: #333; }
.lg .ico { height: 48px; display: flex; align-items: center; justify-content: center; }
.lbl { height: 17px; white-space: nowrap; }
.off, .off .lbl { color: #a6a6a6; }
.w44 { width: 44px; } .w46 { width: 46px; margin-left: 4px; } .w52 { width: 52px; } .w54 { width: 54px; }
.w58 { width: 58px; } .w60 { width: 60px; } .w62 { width: 62px; } .w68 { width: 68px; } .w70 { width: 70px; }
.w76 { width: 76px; } .w84 { width: 84px; } .w88 { width: 88px; }
.hl { height: 85px; margin-top: -1px; background: #c1d8ec; padding-top: 1px; }
.col { display: flex; flex-direction: column; padding-left: 3px; }
.w140 { width: 131px; flex: none; padding-left: 0; }
.sm { display: flex; align-items: center; gap: 8px; height: 28.500px; white-space: nowrap; color: #333; }
.sm.off { color: #a6a6a6; }
.gap4 { gap: 6px; } .gap3 { gap: 5px; }
.sm .lock { margin-left: 3px; }
.navgrid { display: grid; grid-template-columns: 20px 20px; grid-auto-rows: 28.500px; column-gap: 7px; padding-left: 5px; width: 54px; align-items: center; flex: none; }
.icon-a { font: 700 13px "Open Sans", sans-serif; fill: #bdbdbd; }

/* work */
.work { display: flex; height: 825px; margin: 7px 9px 0 7px; gap: 8px; }
.panel { width: 399px; flex: none; border-top: 6px solid #cbcbcb; }
.contents { background: #f6f8f7; border-left: 1px solid #dcdcdc; border-right: 1px solid #dcdcdc; border-bottom: 1px solid #dcdcdc; width: 400px; }
.phead { display: flex; align-items: center; justify-content: space-between; height: 28px; padding: 0 7px 0 6px; }
.ptitle { font-size: 20px; line-height: 28px; color: #505050; }
.pctl { display: flex; align-items: center; gap: 10px; }
.searchline { display: flex; align-items: center; gap: 10px; margin-top: 15px; padding-left: 4px; height: 30px; }
.sbox { display: flex; align-items: center; flex: 1; height: 30px; margin-right: 2px; padding: 0 7px; background: #fff; border: 1px solid #a8a8a8; font-style: italic; color: #555; }
.sbox span { flex: 1; }
.sbox .caret { margin-left: 14px; }
.viewtabs { display: flex; margin: 12px 0 0 20px; height: 28px; }
.viewtabs span { width: 40px; display: flex; align-items: center; justify-content: center; }
.vt-rule { width: 240px; height: 3px; margin: 10px 0 0 20px; background: #cbcbcb; }
.vt-rule i { display: block; width: 40px; height: 3px; background: #0079c1; }
.order { margin: 15px 0 7px 21px; font-size: 17px; line-height: 24px; font-weight: 600; color: #444; }
.tree li { display: flex; align-items: center; height: 30.400px; white-space: nowrap; }
.tri { display: block; width: 8px; height: 8px; flex: none; }
.tri.open { background: #555; clip-path: polygon(100% 0, 100% 100%, 0 100%); }
.tri.shut { width: 6px; height: 11px; background: #9a9a9a; clip-path: polygon(0 0, 100% 50%, 0 100%, 0 90%, 75% 50%, 15% 12%, 15% 88%, 0 100%); }
.chk { display: block; position: relative; width: 18px; height: 18px; background: #fff; border: 1px solid #8a8a8a; margin-left: 7px; flex: none; }
.chk::after { content: ""; position: absolute; left: 5px; top: 1px; width: 5px; height: 11px; border: solid #444; border-width: 0 1.500px 1.500px 0; transform: rotate(40deg); }
.l0 { padding-left: 3px; } .l0 svg { margin: 0 6px 0 7px; }
.l1 { padding-left: 17px; } .l1 .tri { margin-right: 7px; }
.l1.noicon { padding-left: 32px; }
.l2 { padding-left: 31px; } .l2 span, .l3 span { margin-left: 6px; }
.l3 { padding-left: 45px; }
.l4 { padding-left: 62px; margin: -2px 0 2px; }
.selbar { display: flex; align-items: center; width: 100%; height: 24px; padding-left: 4px; background: #c2d9ee; border: 1px solid #0b7bc1; border-right: 0; }
.l5 { padding-left: 54px; }

.view { flex: 1; display: flex; flex-direction: column; min-width: 0; }
.viewtab-strip { display: flex; align-items: flex-end; height: 28px; border-bottom: 2px solid #0079c1; position: relative; }
.scenetab { display: flex; align-items: center; width: 104px; height: 26px; padding: 0 8px; gap: 11px; background: #0079c8; color: #fff; }
.scenetab span { flex: 1; }
.strip-menu { margin-left: auto; margin-right: 5px; margin-bottom: 6px; }
.scene { flex: 1; position: relative; background: #fff; border-left: 1px solid #dcdcdc; border-right: 1px solid #dcdcdc; overflow: hidden; }
.buildings { position: absolute; left: -1px; top: 0; }
.buildings polygon { shape-rendering: crispEdges; }
.side polygon { fill: #12391d; stroke: #12391d; stroke-width: .8; }
.top polygon { fill: #27512f; stroke: #27512f; stroke-width: .8; }
.seam polygon { fill: #0f3319; }
.cube-top { fill: #66a647; } .cube-front { fill: #4c7c31; } .cube-right { fill: #558737; }
.redbox { fill: none; stroke: #fb2014; stroke-width: 4; }
.navbtns { position: absolute; left: 23px; top: 610px; display: flex; align-items: flex-start; gap: 8px; }
.nbtn { display: flex; align-items: center; justify-content: center; width: 20px; height: 20px; background: #f7f7f7; border: 1px solid #c2c2c2; }
.grip { display: grid; grid-template-columns: 3px 3px; gap: 2px 3px; margin-left: 2px; }
.grip i { width: 3px; height: 3px; background: #555; }
.compass { position: absolute; left: 24px; top: 645px; }
.status { display: flex; align-items: center; height: 30px; padding-left: 7px; background: #f5f7f6; border: 1px solid #e2e2e2; border-top: 0; gap: 8px; }
.scale { display: flex; align-items: center; justify-content: space-between; width: 125px; height: 27px; padding: 0 5px 0 6px; background: #fff; border: 1px solid #a8a8a8; }
.vsep { width: 1px; height: 24px; background: #a8a8a8; flex: none; }
.st-first { margin-left: -2px; }
.st-after { margin-left: 2px; }
.coords { margin-left: 164px; margin-top: 3px; white-space: nowrap; }
.chev { margin-left: 8px; margin-top: 3px; }
.elev { margin-left: 2px; margin-top: 3px; }
.vsep.right { margin-left: 176px; }
.selcount { color: #a5a5a5; white-space: nowrap; margin: 2px 0 0 -2px; }
.st-p { margin-left: 2px; }
.pause { display: flex; gap: 4px; }
.pause i { width: 5px; height: 20px; background: #666; }
.st-refresh { margin-left: 2px; }

.catalog { display: flex; flex-direction: column; width: 398px; }
.catalog-body { flex: 1; background: #f6f8f7; border-left: 1px solid #dcdcdc; border-right: 1px solid #dcdcdc; border-bottom: 1px solid #dcdcdc; }
.cattabs { display: flex; align-items: center; height: 30px; margin-top: 12px; padding-left: 7px; gap: 13px; font-size: 15px; }
.cattabs span { color: #444; line-height: 28px; }
.cattabs .on { border-bottom: 2px solid #0079c1; height: 30px; }
.cattabs svg { margin-left: auto; margin-right: 8px; }
.catsearch { display: flex; align-items: center; margin-top: 11px; padding-left: 6px; height: 30px; }
.catsearch .homebtn { display: flex; align-items: center; justify-content: center; width: 25px; height: 30px; margin-left: 5px; background: #f8f8f8; border: 1px solid #e2e2e2; border-right: 0; }
.catsearch .sbox { margin-right: 4px; }
.cattree { margin-top: 7px; }
.cattree li { display: flex; align-items: center; height: 30px; white-space: nowrap; }
.c0 { padding-left: 14px; } .c0 .tri { width: 8px; }
.c0 .tri.shut { width: 6px; margin-right: 2px; margin-left: 2px; }
.c0 svg { margin: 0 11px 0 10px; }
.c0 .tri.shut + svg { margin-left: 8px; }
.c1 { padding-left: 36px; }
.c1 .tri.shut { margin-left: 2px; margin-right: 2px; width: 6px; }
.c1 svg { margin: 0 9px 0 8px; }
.c2 { padding-left: 71px; } .c2 svg { margin-right: 10px; }
.c2.picked { width: 325px; margin-left: 67px; padding-left: 4px; background: #c8c8c8; border: 1px solid #8e8e8e; }
.cat-foot { display: flex; height: 24px; }
.cat-foot span { padding: 3px 7px 0; color: #333; }
.cat-foot .on { width: 66px; color: #0079c1; background: #f6f8f7; border: 1px solid #dcdcdc; border-top: 0; }

.taskstrip { display: flex; height: 10px; margin-top: 8px; overflow: hidden; }
.taskstrip i { display: block; height: 10px; position: relative; }
.s-a { background: #d3e2ea; width: 61px; }
.s-b { background: #fff; width: 428px; }
.s-c { background: #e4eff2; width: 65px; }
.grow1 { width: 390px; }
.grow2 { flex: 1; }
.grow2 b { position: absolute; left: 855px; top: 5px; font: 400 13px/15px "Open Sans", sans-serif; color: #222; }
.watermark { position: absolute; left: 1713px; top: 1008px; font-size: 19.500px; line-height: 24px; color: rgba(120,120,120,.6); white-space: nowrap; }
```
